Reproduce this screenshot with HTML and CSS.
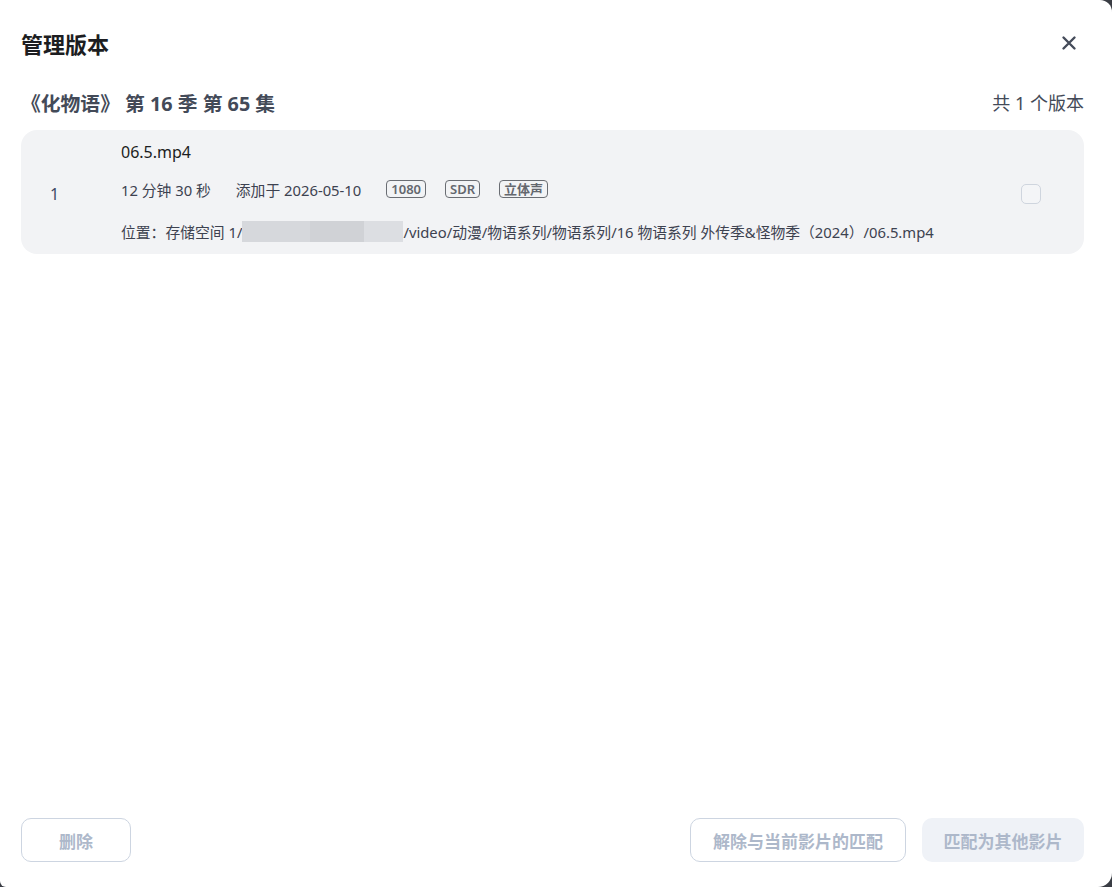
FILE: index.html
```html
<!DOCTYPE html>
<html lang="zh-CN">
<head>
<meta charset="UTF-8">
<meta name="viewport" content="width=device-width, initial-scale=1.0">
<title>管理版本</title>
<link rel="stylesheet" href="styles.css">
</head>
<body>

<div class="dialog">
  <div class="dialog-header">
    <div class="dialog-title">管理版本</div>
    <div class="close-button">
      <svg width="16" height="16" viewBox="0 0 16 16">
        <path d="M2.5 2.5 L13.5 13.5 M13.5 2.5 L2.5 13.5" stroke="#454c5a" stroke-width="2.4" stroke-linecap="round"/>
      </svg>
    </div>
  </div>

  <div class="subheader">
    <div class="episode-title">《化物语》 第 16 季 第 65 集</div>
    <div class="version-count">共 1 个版本</div>
  </div>

  <div class="version-list">
    <div class="version-item">
      <div class="version-index">1</div>
      <div class="version-info">
        <div class="file-name">06.5.mp4</div>
        <div class="file-meta">
          <span class="meta-text">12 分钟 30 秒</span>
          <span class="meta-text">添加于 2026-05-10</span>
          <span class="tag">1080</span>
          <span class="tag">SDR</span>
          <span class="tag">立体声</span>
        </div>
        <div class="file-path">位置：存储空间 1/<span class="redacted"></span>/video/动漫/物语系列/物语系列/16 物语系列 外传季&amp;怪物季（2024）/06.5.mp4</div>
      </div>
      <div class="checkbox"></div>
    </div>
  </div>

  <div class="dialog-footer">
    <div class="btn btn-outline btn-delete">删除</div>
    <div class="footer-right">
      <div class="btn btn-outline btn-unmatch">解除与当前影片的匹配</div>
      <div class="btn btn-filled">匹配为其他影片</div>
    </div>
  </div>
</div>

</body>
</html>
```

FILE: styles.css
```css
body {
  margin: 0;
  padding: 0;
  background-color: #3a3d44;
  font-family: "Noto Sans", "Noto Sans CJK SC", sans-serif;
  height: 100vh;
  overflow: hidden;
}

.dialog {
  height: 100vh;
  box-sizing: border-box;
  background-color: #ffffff;
  border-radius: 0 12px 14px 6px;
  padding: 0 29px 25px 21px;
  display: flex;
  flex-direction: column;
}

.dialog-header {
  display: flex;
  justify-content: space-between;
  align-items: center;
  height: 86px;
}

.dialog-title {
  font-size: 22px;
  font-weight: bold;
  color: #1c1d21;
  margin-top: -1px;
}

.close-button {
  width: 16px;
  height: 16px;
  margin-right: 6px;
  margin-top: -2px;
  cursor: pointer;
}

.subheader {
  display: flex;
  justify-content: space-between;
  align-items: center;
  margin-right: -1px;
  height: 36px;
  margin-top: -2px;
}

.episode-title {
  font-size: 19.8px;
  font-weight: bold;
  color: #434a58;
}

.version-count {
  font-size: 18px;
  color: #434a58;
}

.version-list {
  flex: 1;
  margin-top: 10px;
  margin-right: -1px;
}

.version-item {
  display: flex;
  align-items: center;
  background-color: #f2f3f5;
  border-radius: 16px;
  height: 124px;
  box-sizing: border-box;
}

.version-index {
  width: 100px;
  padding-left: 29px;
  box-sizing: border-box;
  font-size: 16px;
  color: #3f4a66;
  margin-top: 3px;
}

.version-info {
  flex: 1;
  display: flex;
  flex-direction: column;
  padding-top: 6px;
}

.file-name {
  font-size: 16px;
  color: #1c1d21;
  margin-top: -8px;
}

.file-meta {
  display: flex;
  align-items: center;
  margin-top: 16px;
  font-size: 14.8px;
  color: #3d4250;
}

.meta-text {
  margin-right: 25px;
}

.tag {
  font-size: 13px;
  font-weight: 600;
  color: #64676e;
  border: 1.5px solid #6a6d73;
  border-radius: 4px;
  padding: 0 4px;
  line-height: 16px;
  margin-right: 19px;
}

.file-path {
  margin-top: 21px;
  font-size: 14.8px;
  color: #3d4250;
  display: flex;
  align-items: center;
  white-space: nowrap;
}

.redacted {
  display: inline-block;
  width: 161px;
  height: 21px;
  background: linear-gradient(90deg, #d6d8dc 0%, #d6d8dc 42%, #d0d2d6 42%, #d0d2d6 76%, #dcdee2 76%, #dcdee2 100%);
}

.checkbox {
  width: 18px;
  height: 18px;
  border: 1.5px solid #cfd5de;
  border-radius: 5px;
  margin-right: 43px;
  margin-top: 3px;
  background-color: #f4f5f7;
}

.dialog-footer {
  display: flex;
  justify-content: space-between;
  margin-right: -1px;
}

.footer-right {
  display: flex;
  gap: 16px;
}

.btn {
  height: 44px;
  box-sizing: border-box;
  display: flex;
  align-items: center;
  justify-content: center;
  font-size: 17px;
  font-weight: bold;
  color: #adb8ca;
  border-radius: 10px;
}

.btn-outline {
  border: 1px solid #cdd5e1;
  background-color: #ffffff;
}

.btn-delete {
  width: 110px;
}

.btn-unmatch {
  width: 216px;
}

.btn-filled {
  background-color: #eff2f7;
  width: 162px;
}
```
